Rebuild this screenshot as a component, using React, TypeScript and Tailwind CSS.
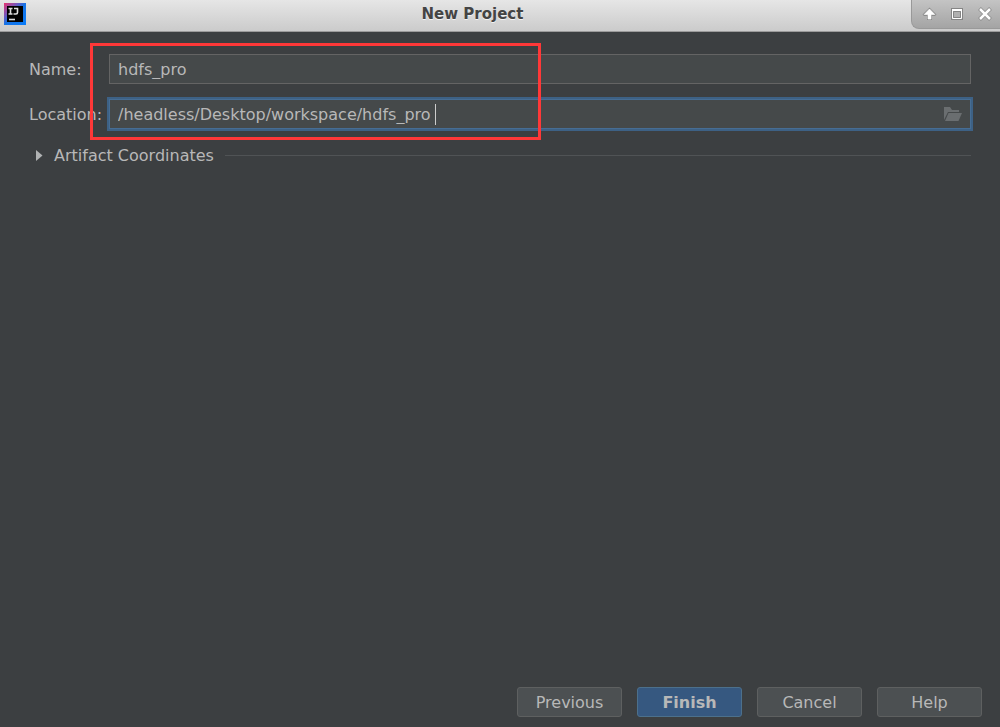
import { useState } from "react"

const buttonBase = "h-[30px] w-[105px] rounded-[3px] border pt-px text-base leading-5"

function AppIcon() {
  return (
    <svg width="22" height="22" viewBox="0 0 22 22" aria-hidden="true">
      <defs>
        <linearGradient id="logo" x1="0" y1="0" x2="1" y2="1">
          <stop offset="0" stopColor="#e8336d" />
          <stop offset="0.3" stopColor="#7a55b8" />
          <stop offset="0.5" stopColor="#1673e6" />
          <stop offset="1" stopColor="#087cfa" />
        </linearGradient>
      </defs>
      <rect width="22" height="22" fill="url(#logo)" />
      <rect x="3" y="3" width="16" height="16" fill="#000" />
      <path d="M4.500 5.500h4M6.500 5v6M4.500 11h4M10 5.500h3.500v4q0 1.500-1.500 1.500H9.500" fill="none" stroke="#ddd" strokeWidth="1.600" />
      <path d="M5 16.500h6" stroke="#ddd" strokeWidth="1.600" />
    </svg>
  )
}

function TitleBar() {
  return (
    <header className="flex h-8 shrink-0 items-stretch border-b border-[#9b9b9b] bg-linear-to-b from-[#e6e6e6] to-[#cbcbcb]">
      <div className="w-[34px] pl-1 pt-[3px]">
        <AppIcon />
      </div>
      <h1 className="flex-1 pt-1 text-center text-[15px] leading-5 font-bold text-[#444444] [text-shadow:0_1px_0_#f2f2f2]">
        New Project
      </h1>
      <div className="flex h-[29px] w-[89px] items-center justify-between rounded-bl-lg border-b border-l border-[#999999] bg-linear-to-b from-[#c4c4c4] to-[#a4a4a4] pl-[10px] pr-2">
        <button type="button" aria-label="Shade">
          <svg width="15" height="14" viewBox="0 0 15 14">
            <path d="M7.500 0.500 14.500 7.500 13 9H10v4H5V9H2L.5 7.500z" fill="#8c8c8c" />
            <path d="M7.500 2 12.800 7.500H9V12H6V7.500H2.200z" fill="#fff" stroke="#fff" strokeWidth="0.600" />
          </svg>
        </button>
        <button type="button" aria-label="Maximize" className="pr-0.5">
          <svg width="14" height="14" viewBox="0 0 14 14">
            <path d="M1 1h12v12H1z" fill="#858585" />
            <path d="M2.500 2.500h9v9h-9z" fill="#b0b0b0" stroke="#fff" />
            <path d="M2 3h10" stroke="#fff" strokeWidth="2" />
            <path d="M3.500 4.500h7v6h-7z" fill="none" stroke="#858585" />
          </svg>
        </button>
        <button type="button" aria-label="Close">
          <svg width="14" height="14" viewBox="0 0 14 14">
            <path d="m1.500 1.500 11 11M12.500 1.500l-11 11" stroke="#8c8c8c" strokeWidth="4" />
            <path d="m2 2 10 10M12 2 2 12" stroke="#fff" strokeWidth="2.500" />
          </svg>
        </button>
      </div>
    </header>
  )
}

export default function App() {
  const [name, setName] = useState("hdfs_pro")
  const [location, setLocation] = useState("/headless/Desktop/workspace/hdfs_pro")

  return (
    <div className="relative flex min-h-screen flex-col bg-[#3c3f41] font-['DejaVu_Sans',sans-serif] text-base leading-5 text-[#b8b8b8]">
      <TitleBar />

      <main className="flex-1 px-[29px] pt-[22px]">
        <div className="flex items-center">
          <label htmlFor="name" className="w-20 shrink-0 pt-px">Name:</label>
          <input
            id="name"
            value={name}
            onChange={(e) => setName(e.target.value)}
            className="h-[30px] min-w-0 flex-1 border border-[#646464] bg-[#45494a] px-2 outline-none"
          />
        </div>

        <div className="mt-[15px] flex items-center">
          <label htmlFor="location" className="w-20 shrink-0 pt-0.5">Location:</label>
          <div className="relative flex h-[30px] min-w-0 flex-1 items-center border border-[#466d94] bg-[#45494a] pr-2 ring-2 ring-[#3d6185]">
            <input
              id="location"
              value={location}
              onChange={(e) => setLocation(e.target.value)}
              className="h-full min-w-0 flex-1 bg-transparent px-2 outline-none"
            />
            {/* Text cursor */}
            <span className="absolute left-[325px] top-1 h-[21px] w-px bg-[#cccccc]" />
            <button type="button" aria-label="Browse">
              <svg width="18" height="15" viewBox="0 0 18 15">
                <path d="M0 13V0h6l2 3h7v2H4z" fill="#6a6e70" />
                <path d="M4.500 6H18l-3.500 8H1z" fill="#6a6e70" />
              </svg>
            </button>
          </div>
        </div>

        <button type="button" aria-expanded="false" className="mt-4 flex w-full items-center text-left">
          <svg width="8" height="12" viewBox="0 0 8 12" className="ml-[6px] mr-[11px]" aria-hidden="true">
            <path d="M1 0 7.500 5.500 1 11z" fill="#b0b2b3" />
          </svg>
          <span className="pt-px">Artifact Coordinates</span>
          <span className="ml-[11px] h-px flex-1 bg-[#505355]" />
        </button>
      </main>

      <footer className="flex justify-end gap-[15px] pb-[10px] pr-[18px]">
        <button type="button" className={`${buttonBase} border-[#5e6060] bg-[#4c5052]`}>Previous</button>
        <button type="button" className={`${buttonBase} border-[#4c708c] bg-[#365880] font-bold`}>Finish</button>
        <button type="button" className={`${buttonBase} border-[#5e6060] bg-[#4c5052]`}>Cancel</button>
        <button type="button" className={`${buttonBase} border-[#5e6060] bg-[#4c5052]`}>Help</button>
      </footer>

      {/* Highlight over the two fields */}
      <div className="pointer-events-none absolute left-[90px] top-[43px] h-[97px] w-[451px] border-3 border-[#ff3838]" />
    </div>
  )
}
